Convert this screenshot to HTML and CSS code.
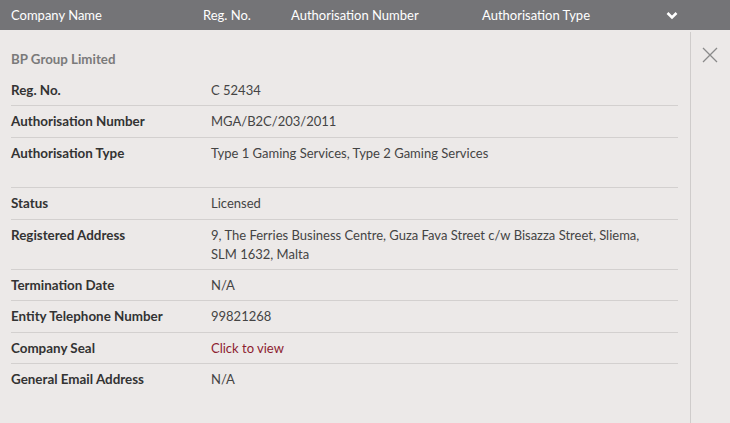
FILE: index.html
```html
<!DOCTYPE html>
<html>
<head>
<meta charset="utf-8">
<link rel="stylesheet" href="styles.css">
</head>
<body>
<div class="page">
  <div class="head">
    <span class="h-name">Company Name</span>
    <span class="h-reg">Reg. No.</span>
    <span class="h-num">Authorisation Number</span>
    <span class="h-type">Authorisation Type</span>
    <svg class="chev" width="12" height="9" viewBox="0 0 12 9"><path d="M1.5 2 L6 6.5 L10.5 2" fill="none" stroke="#fff" stroke-width="2.6"/></svg>
  </div>
  <div class="body">
    <div class="main">
      <div class="title">BP Group Limited</div>
      <div class="rows">
        <div class="row"><div class="k">Reg. No.</div><div class="v">C 52434</div></div>
        <div class="row"><div class="k">Authorisation Number</div><div class="v">MGA/B2C/203/2011</div></div>
        <div class="row"><div class="k">Authorisation Type</div><div class="v tall">Type 1 Gaming Services, Type 2 Gaming Services</div></div>
        <div class="row"><div class="k">Status</div><div class="v">Licensed</div></div>
        <div class="row"><div class="k">Registered Address</div><div class="v">9, The Ferries Business Centre, Guza Fava Street c/w Bisazza Street, Sliema,<br>SLM 1632, Malta</div></div>
        <div class="row"><div class="k">Termination Date</div><div class="v">N/A</div></div>
        <div class="row"><div class="k">Entity Telephone Number</div><div class="v">99821268</div></div>
        <div class="row"><div class="k">Company Seal</div><div class="v"><a class="link" href="#">Click to view</a></div></div>
        <div class="row"><div class="k">General Email Address</div><div class="v">N/A</div></div>
      </div>
    </div>
    <div class="side">
      <svg class="close" width="16" height="16" viewBox="0 0 16 16"><path d="M1 1 L15 15 M15 1 L1 15" stroke="#8a8a8a" stroke-width="1.3" fill="none"/></svg>
    </div>
  </div>
</div>
</body>
</html>
```

FILE: styles.css
```css
* { box-sizing: border-box; }
html, body { margin: 0; padding: 0; }
body {
  font-family: Lato, "Open Sans", sans-serif;
  font-size: 13px;
  color: #333;
  background: #ece9e8;
  width: 730px;
  height: 423px;
  overflow: hidden;
}
.page { display: flex; flex-direction: column; height: 423px; }
.head {
  height: 30px;
  background: #747477;
  color: #fff;
  display: flex;
  align-items: center;
  font-size: 13px;
  position: relative;
}
.head span { position: absolute; top: 7px; line-height: 16px; }
.h-name { left: 11px; }
.h-reg { left: 203px; }
.h-num { left: 291px; }
.h-type { left: 482px; }
.chev { position: absolute; left: 666px; top: 11px; }
.body { flex: 1; display: flex; }
.main { width: 690px; padding: 20px 12px 0 11px; }
.side {
  flex: 1;
  border-left: 1px solid #cfcccb;
  margin-top: 2px;
  display: flex;
  justify-content: center;
  padding-top: 15px;
  padding-right: 1px;
}
.close { display: block; }
.title {
  font-weight: bold;
  color: #7a7a7a;
  line-height: 19px;
  margin-bottom: 6px;
  font-size: 13.3px;
}
.row {
  display: flex;
  line-height: 19px;
  padding: 6px 0 5.4px;
  border-top: 1px solid #d3d0cf;
}
.row:first-child { border-top: none; }
.k { width: 200px; font-weight: bold; color: #333; font-size: 13.4px; }
.v { flex: 1; color: #444; }
.tall { min-height: 38px; }
.link { color: #8c1c30; text-decoration: none; }
```
